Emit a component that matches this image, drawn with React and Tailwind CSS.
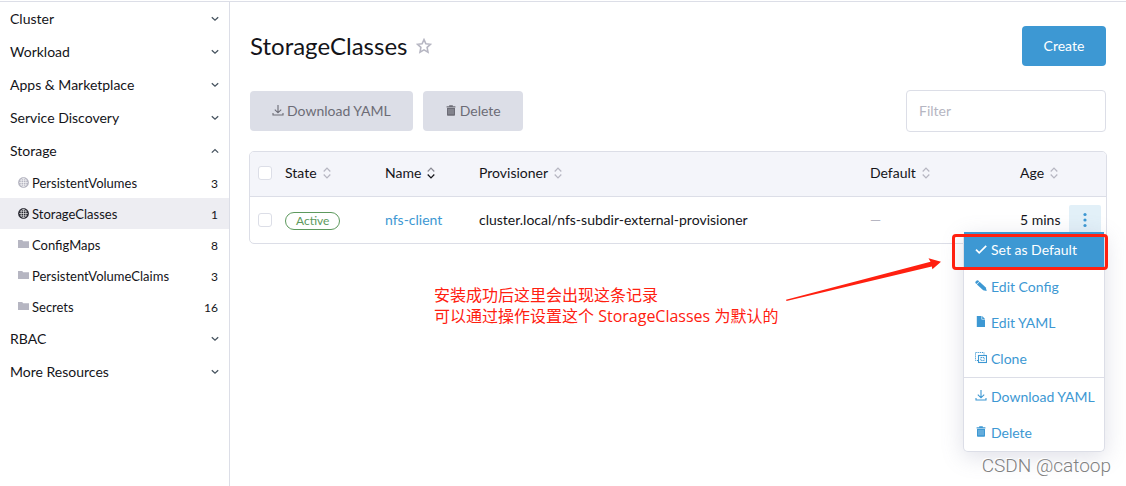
import React, { useState } from 'react';

const GROUPS = [
  { name: 'Cluster' },
  { name: 'Workload' },
  { name: 'Apps & Marketplace' },
  { name: 'Service Discovery' },
  {
    name: 'Storage',
    children: [
      { name: 'PersistentVolumes', icon: 'globe', count: 3 },
      { name: 'StorageClasses', icon: 'globe', count: 1, active: true },
      { name: 'ConfigMaps', icon: 'folder', count: 8 },
      { name: 'PersistentVolumeClaims', icon: 'folder', count: 3 },
      { name: 'Secrets', icon: 'folder', count: 16 },
    ],
  },
  { name: 'RBAC' },
  { name: 'More Resources' },
];

function ChevronIcon({ up }) {
  return (
    <svg width="8" height="6" viewBox="0 0 8 6" fill="none" stroke="#46535f" strokeWidth="1.3">
      <path d={up ? 'M0.8 4.6L4 1.6l3.2 3' : 'M0.8 1.2L4 4.2l3.2-3'} />
    </svg>
  );
}

function GlobeIcon() {
  return (
    <svg width="11" height="11" viewBox="0 0 11 11">
      <circle cx="5.5" cy="5.5" r="5.4" fill="currentColor" />
      <g fill="none" stroke="#fff" strokeWidth="0.6">
        <path d="M5.5 1.2v8.6M1.2 5.5h8.6M2 3.2h7M2 7.8h7" />
        <ellipse cx="5.5" cy="5.5" rx="2.4" ry="4.3" />
      </g>
    </svg>
  );
}

function FolderIcon() {
  return (
    <svg width="11" height="9" viewBox="0 0 11 9" fill="currentColor">
      <path d="M0 0h4.2l1 1.2H11V8H0z" />
    </svg>
  );
}

function SortIcon({ sorted }) {
  return (
    <svg width="8" height="12" viewBox="0 0 8 12" fill="none" strokeWidth="1.2">
      <path d="M0.7 4.5L4 1l3.3 3.5" stroke={sorted ? '#8a8a94' : '#b6b6c2'} />
      <path d="M0.7 7.5L4 11l3.3-3.5" stroke={sorted ? '#141419' : '#b6b6c2'} />
    </svg>
  );
}

function DownloadIcon() {
  return (
    <svg width="12" height="12" viewBox="0 0 12 12" fill="none" stroke="currentColor" strokeWidth="1.1">
      <path d="M6 0v7.7M2.8 4.7L6 7.8l3.2-3.1M1 8.1v1.9h10V8.1" />
    </svg>
  );
}

function TrashIcon() {
  return (
    <svg width="12" height="12" viewBox="0 0 12 12" fill="currentColor">
      <path d="M4.2 0.3h3.6V1.2H10.4v1.3H1.6V1.2h2.6z" />
      <path fillRule="evenodd" d="M2 2.9h8v7q0 0.8-0.8 0.8H2.8q-0.8 0-0.8-0.8zM3.8 4.1v5.2h0.4V4.1zM5.8 4.1v5.2h0.4V4.1zM7.8 4.1v5.2h0.4V4.1z" />
    </svg>
  );
}

function CheckIcon() {
  return (
    <svg width="12" height="12" viewBox="0 0 12 12" fill="none" stroke="currentColor" strokeWidth="1.7">
      <path d="M1 5.6l3.2 3.2L11.2 1.8" />
    </svg>
  );
}

function PencilIcon() {
  return (
    <svg width="12" height="12" viewBox="0 0 12 12" fill="currentColor">
      <path d="M0.3 2.4q0-0.5 0.4-0.9L2 0.4Q2.5 0 3 0.4L4.2 1.4 1.5 4.1 0.6 3.2z" />
      <path d="M1.9 4.5L4.6 1.8l6.2 5.8 0.9 3.4-3.5-0.7z" />
    </svg>
  );
}

function FileIcon() {
  return (
    <svg width="12" height="12" viewBox="0 0 12 12" fill="currentColor">
      <path d="M1.8 0h4.7v3.6H10V11H1.8z" />
      <path d="M7.2 0L10 2.9H7.2z" />
    </svg>
  );
}

function CloneIcon() {
  return (
    <svg width="12" height="12" viewBox="0 0 12 12" fill="none" stroke="currentColor">
      <path d="M3 8.5H0.5V0.5h8.5V3" strokeDasharray="1.2 0.9" />
      <rect x="3.5" y="3.5" width="8" height="7" strokeWidth="1.1" />
      <rect x="5.8" y="5.5" width="3.4" height="3" strokeWidth="0.9" strokeDasharray="1.4 0.6" />
    </svg>
  );
}

function StarIcon() {
  return (
    <svg width="16" height="16" viewBox="0 0 16 16" fill="none" stroke="#b6b6c2" strokeWidth="1.6">
      <path d="M8 1.6l1.9 4.2 4.6 0.5-3.4 3.1 0.9 4.8L8 11.9l-4 2.3 0.9-4.8L1.5 6.3l4.6-0.5z" />
    </svg>
  );
}

function SideNav() {
  return (
    <nav className="w-[230px] shrink-0 border-r border-[#dcdee7]">
      {GROUPS.map((group) => (
        <div key={group.name}>
          <button
            type="button"
            aria-expanded={!!group.children}
            className="flex h-[33px] w-full items-center justify-between px-[10px]"
          >
            {group.name}
            <ChevronIcon up={!!group.children} />
          </button>
          {group.children && (
            <ul>
              {group.children.map((item) => (
                <li key={item.name}>
                  <a
                    href="#"
                    className={`flex h-[31px] items-center pt-[2px] pr-[11px] pl-[18px] text-[13px] ${item.active ? 'bg-[#ededf2]' : ''}`}
                  >
                    <span className={`mr-[3px] pb-[2px] ${item.active ? 'text-[#2a2a33]' : 'text-[#b6b6c2]'}`}>
                      {item.icon === 'globe' ? <GlobeIcon /> : <FolderIcon />}
                    </span>
                    {item.name}
                    <span className="ml-auto text-[12px]">{item.count}</span>
                  </a>
                </li>
              ))}
            </ul>
          )}
        </div>
      ))}
    </nav>
  );
}

function MenuItem({ icon, children }) {
  return (
    <li>
      <button type="button" role="menuitem" className="flex h-9 w-full items-center gap-1 pl-[11px] text-[#3d98d3]">
        {icon}
        {children}
      </button>
    </li>
  );
}

function ActionMenu() {
  return (
    <div className="absolute top-[35px] right-px z-10 w-[142px] rounded-[5px] border border-t-0 border-[#dcdee7] bg-white whitespace-nowrap shadow-[0_5px_22px_rgba(110,115,150,0.22)]">
      <ul role="menu" className="pb-px">
        <li className="relative">
          <button
            type="button"
            role="menuitem"
            className="flex h-9 w-full items-center gap-1 bg-[#3d98d3] pb-px pl-[11px] text-white"
          >
            <CheckIcon />
            Set as Default
          </button>
          <span className="absolute top-[2px] -right-1 -bottom-[2px] -left-3 rounded-[4px] border-3 border-[#ff2010]" />
        </li>
        <MenuItem icon={<PencilIcon />}>Edit Config</MenuItem>
        <MenuItem icon={<FileIcon />}>Edit YAML</MenuItem>
        <MenuItem icon={<CloneIcon />}>Clone</MenuItem>
        <li role="separator" className="mt-px border-t border-[#dcdee7]" />
        <MenuItem icon={<DownloadIcon />}>Download YAML</MenuItem>
        <MenuItem icon={<TrashIcon />}>Delete</MenuItem>
      </ul>
    </div>
  );
}

function HeaderCell({ children, width, sorted }) {
  return (
    <th className={`h-[45px] border-b border-[#dcdee7] bg-[#f4f5fa] px-[5px] pb-[3px] text-left font-normal ${width}`}>
      <span className="flex items-center gap-[6px]">
        {children}
        <SortIcon sorted={sorted} />
      </span>
    </th>
  );
}

function Checkbox({ label }) {
  return (
    <input
      type="checkbox"
      aria-label={label}
      className="mx-auto block size-[14px] appearance-none rounded-[3px] border border-[#dcdee7] bg-white"
    />
  );
}

function StorageTable() {
  return (
    <div className="-mx-px mt-[19px] rounded-[5px] border border-[#dcdee7]">
      <table className="w-full table-fixed border-separate border-spacing-0">
        <thead>
          <tr>
            <th className="w-[30px] rounded-tl-[4px] border-b border-[#dcdee7] bg-[#f4f5fa] pb-[3px]">
              <Checkbox label="Select all" />
            </th>
            <HeaderCell width="w-[100px]">State</HeaderCell>
            <HeaderCell width="w-[94px]" sorted>Name</HeaderCell>
            <HeaderCell width="w-auto">Provisioner</HeaderCell>
            <HeaderCell width="w-[150px]">Default</HeaderCell>
            <HeaderCell width="w-[49px]">Age</HeaderCell>
            <th className="w-[42px] rounded-tr-[4px] border-b border-[#dcdee7] bg-[#f4f5fa]" />
          </tr>
        </thead>
        <tbody>
          <tr>
            <td className="h-[46px]">
              <Checkbox label="Select nfs-client" />
            </td>
            <td className="px-[5px] pb-[2px]">
              <span className="inline-block rounded-full border border-[#5d995d] px-[10px] text-[12px] leading-4 text-[#5d995d]">
                Active
              </span>
            </td>
            <td className="px-[5px] pb-[2px]">
              <a href="#" className="text-[#3d98d3]">nfs-client</a>
            </td>
            <td className="px-[5px] pb-[2px]">cluster.local/nfs-subdir-external-provisioner</td>
            <td className="px-[5px] pb-[2px] text-[#b6b6c2]">—</td>
            <td className="px-[5px] pb-[2px] whitespace-nowrap">5 mins</td>
            <td className="relative px-[5px]">
              <button
                type="button"
                aria-label="Row actions"
                className="flex h-[30px] w-8 items-center justify-center rounded-[2px] bg-[#e2f0f8] text-[#3d98d3]"
              >
                <svg width="4" height="16" viewBox="0 0 4 16" fill="currentColor">
                  <circle cx="2" cy="2.5" r="1.6" />
                  <circle cx="2" cy="8" r="1.6" />
                  <circle cx="2" cy="13.5" r="1.6" />
                </svg>
              </button>
              <ActionMenu />
            </td>
          </tr>
        </tbody>
      </table>
    </div>
  );
}

function Note() {
  return (
    <div className="mt-[14px] flex items-start justify-end gap-1 pr-[165px]">
      <p className="mt-[27px] w-[348px] font-['Open_Sans','Noto_Sans_CJK_SC',sans-serif] text-[16px] leading-[21px] whitespace-nowrap text-[#ff2010]">
        安装成功后这里会出现这条记录
        <br />
        可以通过操作设置这个 StorageClasses 为默认的
      </p>
      <svg width="155" height="44" viewBox="0 0 155 44" className="shrink-0 overflow-visible" fill="#ff2010">
        <path d="M0 41.8L144.5 3.8l-2-3.6L155 3.8l-8.6 7.4-0.6-2.8L0.5 43z" />
      </svg>
    </div>
  );
}

function App() {
  const [filter, setFilter] = useState('');
  const disabledBtn = 'flex h-10 items-center gap-[3px] rounded-[4px] bg-[#dcdee7] px-[22px] pb-px text-[#6c6c76]';

  return (
    <div className="relative flex min-h-screen flex-col bg-white pt-px font-[Lato,sans-serif] text-[14px] text-[#141419]">
      <div className="flex flex-1 border-t border-[#dcdee7]">
        <SideNav />
        <main className="min-w-0 flex-1 px-5 pt-6">
          <header className="flex items-center justify-between">
            <h1 className="flex items-center gap-[9px] text-[24px]">
              StorageClasses
              <StarIcon />
            </h1>
            <button type="button" className="h-10 min-w-[84px] rounded-[4px] bg-[#3d98d3] px-5 pb-px text-white">Create</button>
          </header>

          <div className="mt-6 flex items-center gap-[10px]">
            <button type="button" className={disabledBtn}>
              <DownloadIcon />
              Download YAML
            </button>
            <button type="button" className={disabledBtn}>
              <TrashIcon />
              Delete
            </button>
            <input
              type="text"
              aria-label="Filter"
              placeholder="Filter"
              value={filter}
              onChange={(e) => setFilter(e.target.value)}
              className="ml-auto h-[42px] w-[200px] rounded-[4px] border border-[#dcdee7] px-3 pb-[2px] placeholder:text-[#b6b6c2]"
            />
          </div>

          <StorageTable />
          <Note />
        </main>
      </div>
      <span className="absolute right-[15px] bottom-2 z-20 font-[Roboto,sans-serif] text-[19px] leading-6 font-light text-[#808080] [text-shadow:-1px_-1px_0_#ffffff]">
        CSDN @catoop
      </span>
    </div>
  );
}

export default App;
